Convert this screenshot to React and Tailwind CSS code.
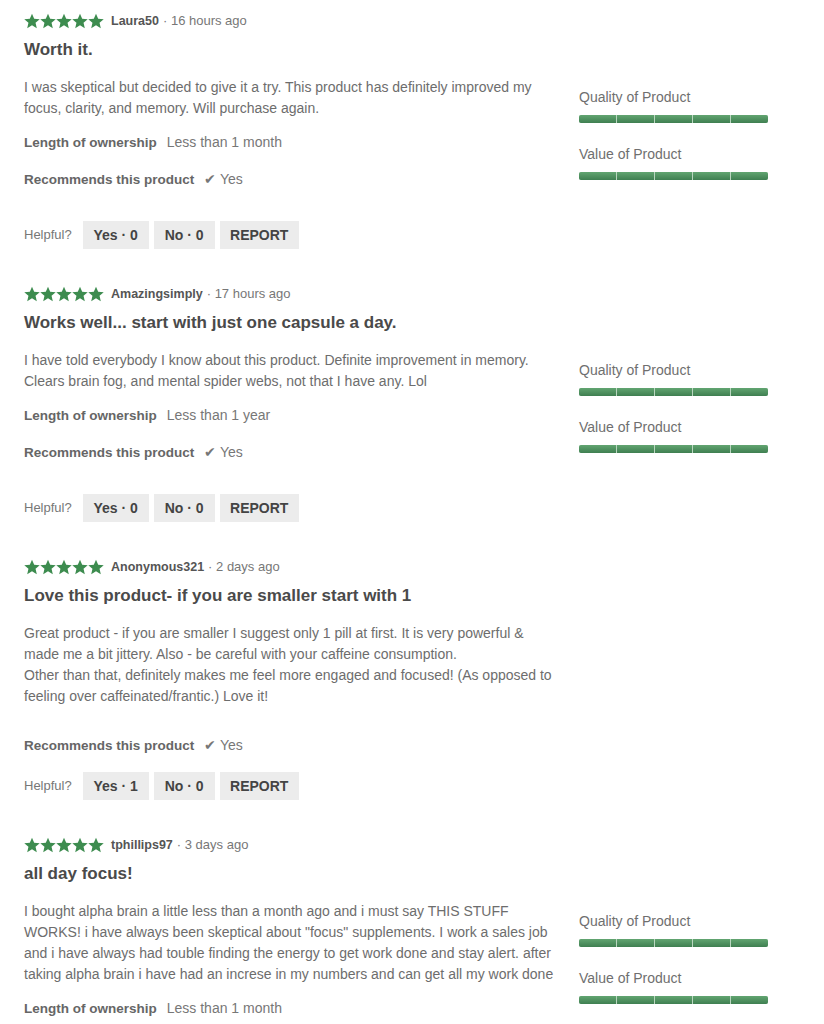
const reviews = [
  {
    user: "Laura50",
    when: "16 hours ago",
    title: "Worth it.",
    body: [
      "I was skeptical but decided to give it a try. This product has definitely improved my",
      "focus, clarity, and memory. Will purchase again.",
    ],
    ownership: "Less than 1 month",
    ratings: true,
    yes: 0,
    no: 0,
  },
  {
    user: "Amazingsimply",
    when: "17 hours ago",
    title: "Works well... start with just one capsule a day.",
    body: [
      "I have told everybody I know about this product. Definite improvement in memory.",
      "Clears brain fog, and mental spider webs, not that I have any. Lol",
    ],
    ownership: "Less than 1 year",
    ratings: true,
    yes: 0,
    no: 0,
  },
  {
    user: "Anonymous321",
    when: "2 days ago",
    title: "Love this product- if you are smaller start with 1",
    body: [
      "Great product - if you are smaller I suggest only 1 pill at first. It is very powerful &",
      "made me a bit jittery. Also - be careful with your caffeine consumption.",
      "Other than that, definitely makes me feel more engaged and focused! (As opposed to",
      "feeling over caffeinated/frantic.) Love it!",
    ],
    ownership: null,
    ratings: false,
    yes: 1,
    no: 0,
  },
  {
    user: "tphillips97",
    when: "3 days ago",
    title: "all day focus!",
    body: [
      'I bought alpha brain a little less than a month ago and i must say THIS STUFF',
      'WORKS! i have always been skeptical about "focus" supplements. I work a sales job',
      "and i have always had touble finding the energy to get work done and stay alert. after",
      "taking alpha brain i have had an increse in my numbers and can get all my work done",
    ],
    ownership: "Less than 1 month",
    ratings: true,
    yes: 0,
    no: 0,
    partial: true,
  },
];

function Star() {
  return (
    <svg viewBox="0 0 24 24" className="h-4 w-4 shrink-0" aria-hidden="true">
      <path
        d="M12 1l3.3 7.6 8.3.7-6.3 5.4 1.9 8.1L12 18.5l-7.2 4.3 1.9-8.1L.4 9.3l8.3-.7z"
        fill="#3d8c4f"
      />
    </svg>
  );
}

function RatingBar({ label, className = "" }) {
  return (
    <div className={className}>
      <p className="text-[14px] leading-[20px] text-[#6f6f6f]">{label}</p>
      <div className="mt-2 flex h-2 w-[189px] gap-px overflow-hidden rounded-[2px] bg-[#b9d6bf]">
        {[0, 1, 2, 3, 4].map((i) => (
          <div key={i} className="flex-1 bg-linear-to-b from-[#62a571] to-[#3f7f51]" />
        ))}
      </div>
    </div>
  );
}

function Detail({ label, value, className = "" }) {
  return (
    <div className={`flex h-5 items-baseline leading-5 ${className}`}>
      <span className="text-[13.5px] font-bold text-[#666]">{label}</span>
      <span className="ml-[10px] text-[14px] text-[#777]">{value}</span>
    </div>
  );
}

function Review({ review, first }) {
  const hasOwnership = !!review.ownership;
  return (
    <article className={first ? "" : "mt-[37px]"}>
      <div className="flex h-4 items-center">
        <div className="flex">
          {[0, 1, 2, 3, 4].map((i) => (
            <Star key={i} />
          ))}
        </div>
        <div className="flex h-4 items-baseline leading-4">
          <span className="ml-[7px] text-[12.5px] font-bold text-[#555]">{review.user}</span>
          <span className="ml-1 text-[13px] text-[#777]">· {review.when}</span>
        </div>
      </div>

      <h3 className="mt-[9px] text-[17px] font-bold leading-6 text-[#4a4a4a]">
        {review.title}
      </h3>

      <div className="mt-[15px] flex">
        <div className="w-[555px]">
          <p className="text-[14px] leading-[21px] text-[#6d6d6d]">
            {review.body.map((line, i) => (
              <span key={i} className="block whitespace-nowrap">
                {line}
              </span>
            ))}
          </p>
          {hasOwnership && (
            <Detail label="Length of ownership" value={review.ownership} className="mt-[13px]" />
          )}
          {!review.partial && (
            <Detail
              label="Recommends this product"
              value="✔ Yes"
              className={hasOwnership ? "mt-[17px]" : "mt-[28px]"}
            />
          )}
        </div>
        {review.ratings && (
          <div className="pt-[10px]">
            <RatingBar label="Quality of Product" />
            <RatingBar label="Value of Product" className="mt-[21px]" />
          </div>
        )}
      </div>

      {!review.partial && (
        <div className={`${hasOwnership ? "mt-[32px]" : "mt-[17px]"} flex h-7 items-center`}>
          <span className="text-[13px] leading-5 text-[#777]">Helpful?</span>
          <div className="ml-[11px] flex gap-[5px] text-[14px] font-bold leading-5 text-[#444]">
            <button className="h-7 w-[66px] bg-[#ececec]">Yes · {review.yes}</button>
            <button className="h-7 w-[61px] bg-[#ececec]">No · {review.no}</button>
            <button className="h-7 w-[79px] bg-[#ececec]">REPORT</button>
          </div>
        </div>
      )}
    </article>
  );
}

export default function App() {
  return (
    <div
      className="h-[1024px] overflow-hidden bg-white pl-6 pt-[13px]"
      style={{ fontFamily: '"Liberation Sans", Arial, sans-serif' }}
    >
      {reviews.map((review, i) => (
        <Review key={review.user} review={review} first={i === 0} />
      ))}
    </div>
  );
}
